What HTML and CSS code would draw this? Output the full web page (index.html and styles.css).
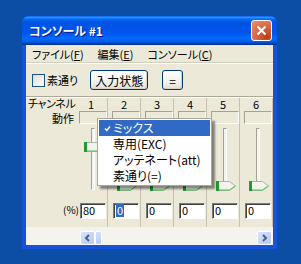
FILE: index.html
```html
<!DOCTYPE html>
<html lang="ja">
<head>
  <meta charset="UTF-8">
  <title>コンソール #1</title>
  <link rel="stylesheet" href="styles.css">
</head>
<body>
  <div class="window">
    <div class="titlebar">
      <span class="title">コンソール #1</span>
      <span class="close">
        <svg width="11" height="11" viewBox="0 0 11 11"><path d="M1.5 1.5L9.5 9.5M9.5 1.5L1.5 9.5" stroke="#fff" stroke-width="2" fill="none"/></svg>
      </span>
    </div>
    <div class="client">
      <div class="menubar">
        <span>ファイル(<u>F</u>)</span>
        <span>編集(<u>E</u>)</span>
        <span>コンソール(<u>C</u>)</span>
      </div>
      <div class="toolbar">
        <span class="check"><span class="box"></span>素通り</span>
        <span class="btn">入力状態</span>
        <span class="btn small">=</span>
      </div>
      <div class="mixer">
        <div class="labels">
          <div class="lab-ch">チャンネル</div>
          <div class="lab-op">動作</div>
          <div class="lab-sp"></div>
          <div class="lab-pct">(%)</div>
        </div>
        <div class="ch">
          <div class="num">1</div>
          <div class="combo"></div>
          <div class="slider">
            <div class="track"></div>
            <svg class="thumb" style="top:18px" width="20" height="10" viewBox="0 0 20 10"><path d="M0.5 0.5H13.5L19.5 5L13.5 9.5H0.5Z" fill="#f3f2ec" stroke="#a9b8a2"/><rect x="0" y="0" width="3" height="10" fill="#1e9a33"/><path d="M3 9H13.5L19.2 5" fill="none" stroke="#4cc058"/></svg>
          </div>
          <div class="field">80</div>
        </div>
        <div class="ch">
          <div class="num">2</div>
          <div class="combo"></div>
          <div class="slider">
            <div class="track"></div>
            <svg class="thumb" style="top:57px" width="20" height="10" viewBox="0 0 20 10"><path d="M0.5 0.5H13.5L19.5 5L13.5 9.5H0.5Z" fill="#f3f2ec" stroke="#a9b8a2"/><rect x="0" y="0" width="3" height="10" fill="#1e9a33"/><path d="M3 9H13.5L19.2 5" fill="none" stroke="#4cc058"/></svg>
          </div>
          <div class="field"><span class="sel">0</span></div>
        </div>
        <div class="ch">
          <div class="num">3</div>
          <div class="combo"></div>
          <div class="slider">
            <div class="track"></div>
            <svg class="thumb" style="top:57px" width="20" height="10" viewBox="0 0 20 10"><path d="M0.5 0.5H13.5L19.5 5L13.5 9.5H0.5Z" fill="#f3f2ec" stroke="#a9b8a2"/><rect x="0" y="0" width="3" height="10" fill="#1e9a33"/><path d="M3 9H13.5L19.2 5" fill="none" stroke="#4cc058"/></svg>
          </div>
          <div class="field">0</div>
        </div>
        <div class="ch">
          <div class="num">4</div>
          <div class="combo"></div>
          <div class="slider">
            <div class="track"></div>
            <svg class="thumb" style="top:57px" width="20" height="10" viewBox="0 0 20 10"><path d="M0.5 0.5H13.5L19.5 5L13.5 9.5H0.5Z" fill="#f3f2ec" stroke="#a9b8a2"/><rect x="0" y="0" width="3" height="10" fill="#1e9a33"/><path d="M3 9H13.5L19.2 5" fill="none" stroke="#4cc058"/></svg>
          </div>
          <div class="field">0</div>
        </div>
        <div class="ch">
          <div class="num">5</div>
          <div class="combo"></div>
          <div class="slider">
            <div class="track"></div>
            <svg class="thumb" style="top:57px" width="20" height="10" viewBox="0 0 20 10"><path d="M0.5 0.5H13.5L19.5 5L13.5 9.5H0.5Z" fill="#f3f2ec" stroke="#a9b8a2"/><rect x="0" y="0" width="3" height="10" fill="#1e9a33"/><path d="M3 9H13.5L19.2 5" fill="none" stroke="#4cc058"/></svg>
          </div>
          <div class="field">0</div>
        </div>
        <div class="ch">
          <div class="num">6</div>
          <div class="combo"></div>
          <div class="slider">
            <div class="track"></div>
            <svg class="thumb" style="top:57px" width="20" height="10" viewBox="0 0 20 10"><path d="M0.5 0.5H13.5L19.5 5L13.5 9.5H0.5Z" fill="#f3f2ec" stroke="#a9b8a2"/><rect x="0" y="0" width="3" height="10" fill="#1e9a33"/><path d="M3 9H13.5L19.2 5" fill="none" stroke="#4cc058"/></svg>
          </div>
          <div class="field">0</div>
        </div>
      </div>
      <div class="hscroll">
        <span class="sbtn"><svg width="7" height="8" viewBox="0 0 7 8"><path d="M5 1L2 4L5 7" stroke="#4d6185" stroke-width="2" fill="none"/></svg></span>
        <span class="sthumb"></span>
        <span class="sfill"></span>
        <span class="sbtn"><svg width="7" height="8" viewBox="0 0 7 8"><path d="M2 1L5 4L2 7" stroke="#4d6185" stroke-width="2" fill="none"/></svg></span>
      </div>
    </div>

    <div class="popup">
      <div class="item on">
        <svg class="tick" width="7" height="7" viewBox="0 0 7 7"><path d="M1 3.5L2.8 5.5L6 1.5" stroke="#fff" stroke-width="1.4" fill="none"/></svg>
        ミックス
      </div>
      <div class="item">専用(EXC)</div>
      <div class="item">アッテネート(att)</div>
      <div class="item">素通り(=)</div>
    </div>
  </div>
</body>
</html>
```

FILE: styles.css
```css
*{
  padding: 0;
  margin: 0;
  box-sizing: border-box;
}
body{
  background: #0c4ea6;
  font-family: "Noto Sans CJK JP", sans-serif;
  font-size: 11px;
  font-feature-settings: "palt" 1;
  color: #000;
  overflow: hidden;
}
.window{
  position: relative;
  margin: 16px 0 0 22px;
  width: 255px;
  padding-bottom: 4px;
  background: #1752d8;
  border-radius: 7px 7px 0 0;
}
.titlebar{
  height: 29px;
  display: flex;
  align-items: center;
  padding: 0 5px 0 7px;
  border-radius: 7px 7px 0 0;
  background: linear-gradient(to bottom, #0058ee 0%, #3a93ff 4%, #288eff 6%, #127dff 8%, #036ffc 10%, #0262ee 14%, #0057e5 20%, #0054e3 24%, #0055eb 56%, #005bf5 66%, #026afe 76%, #0062ef 86%, #0052d6 92%, #0040ab 94%, #003092 100%);
  color: #fff;
  font-size: 12px;
  font-weight: bold;
  text-shadow: 1px 1px #0f1089;
}
.title{
  flex: 1;
}
.close{
  width: 21px;
  height: 21px;
  display: flex;
  align-items: center;
  justify-content: center;
  border: 1px solid #fff;
  border-radius: 3px;
  background: radial-gradient(circle at 80% 85%, #c13b14 0%, #d8643f 45%, #e9906f 100%);
}
.client{
  margin: 0 4px;
  background: #ece9d8;
  overflow: hidden;
}
.menubar{
  height: 18px;
  display: flex;
  align-items: center;
  gap: 14px;
  padding-left: 6px;
  border-bottom: 1px solid #d1cebf;
}
.toolbar{
  height: 34px;
  display: flex;
  align-items: center;
  padding-left: 6px;
  border-top: 1px solid #fff;
  border-bottom: 1px solid #aca899;
}
.check{
  display: flex;
  align-items: center;
  gap: 2px;
}
.box{
  width: 13px;
  height: 13px;
  border: 1px solid #1c5180;
  background: linear-gradient(135deg, #dcdcd7, #fff);
}
.btn{
  height: 20px;
  display: flex;
  align-items: center;
  justify-content: center;
  margin-left: 12px;
  width: 58px;
  font-size: 12px;
  white-space: nowrap;
  border: 1px solid #003c74;
  border-radius: 3px;
  background: linear-gradient(#fff, #f3f2ec 60%, #e3e0d4);
  box-shadow: inset -1px -1px #d6d0c5;
}
.btn.small{
  width: 21px;
  margin-left: 14px;
}
.mixer{
  display: grid;
  grid-template-columns: 49px repeat(6, 33px);
  height: 130px;
  border-top: 1px solid #fff;
}
.labels{
  display: flex;
  flex-direction: column;
  white-space: nowrap;
}
.lab-ch{
  height: 12px;
  line-height: 11px;
  padding-left: 2px;
  letter-spacing: -0.4px;
}
.lab-op{
  height: 14px;
  line-height: 12px;
  padding-top: 2px;
  text-align: right;
  padding-right: 1px;
}
.lab-sp{
  height: 78px;
}
.lab-pct{
  height: 16px;
  line-height: 16px;
  text-align: right;
  margin-right: -4px;
  font-size: 10px;
}
.ch{
  display: flex;
  flex-direction: column;
  border-right: 1px solid #c5c2b2;
}
.num{
  height: 12px;
  line-height: 12px;
  text-align: center;
}
.combo{
  width: 28px;
  height: 13px;
  margin: 1px 0 0 4px;
  border: 1px solid;
  border-color: #a3a193 #fff #fff #a3a193;
}
.slider{
  position: relative;
  height: 72px;
}
.track{
  position: absolute;
  left: 16px;
  top: 4px;
  width: 4px;
  height: 62px;
  border: 1px solid;
  border-color: #a3a193 #fff #fff #a3a193;
  background: #f4f3ee;
}
.thumb{
  position: absolute;
  left: 9px;
  display: block;
}
.field{
  width: 26px;
  height: 16px;
  margin: 7px 0 0 5px;
  padding-left: 2px;
  line-height: 13px;
  font-size: 11px;
  background: #fff;
  border: 1px solid;
  border-color: #7a7a7a #fff #fff #7a7a7a;
  box-shadow: inset 1px 1px #404040;
}
.sel{
  display: inline-block;
  background: #316ac5;
  color: #fff;
  padding: 0 1px;
}
.hscroll{
  height: 18px;
  display: flex;
  align-items: flex-end;
  padding: 0 1px 0 54px;
  background: #f4f3ee;
}
.sbtn{
  width: 15px;
  height: 14px;
  display: flex;
  align-items: center;
  justify-content: center;
  border: 1px solid #fff;
  border-radius: 2px;
  background: linear-gradient(135deg, #d8e4fd, #b6caf4);
}
.sthumb{
  width: 7px;
  height: 14px;
  border: 1px solid #fff;
  border-radius: 2px;
  background: linear-gradient(#cfdcfb, #bccff6);
}
.sfill{
  flex: 1;
}
.popup{
  position: absolute;
  left: 75px;
  top: 102px;
  width: 115px;
  padding: 1px;
  background: #fff;
  border: 1px solid #aca899;
  box-shadow: 3px 3px 2px rgba(0, 0, 0, 0.45);
  font-size: 12px;
}
.item{
  position: relative;
  height: 16px;
  line-height: 16px;
  padding-left: 14px;
}
.item.on{
  background: #316ac5;
  color: #fff;
}
.tick{
  position: absolute;
  left: 5px;
  top: 5px;
}
```
